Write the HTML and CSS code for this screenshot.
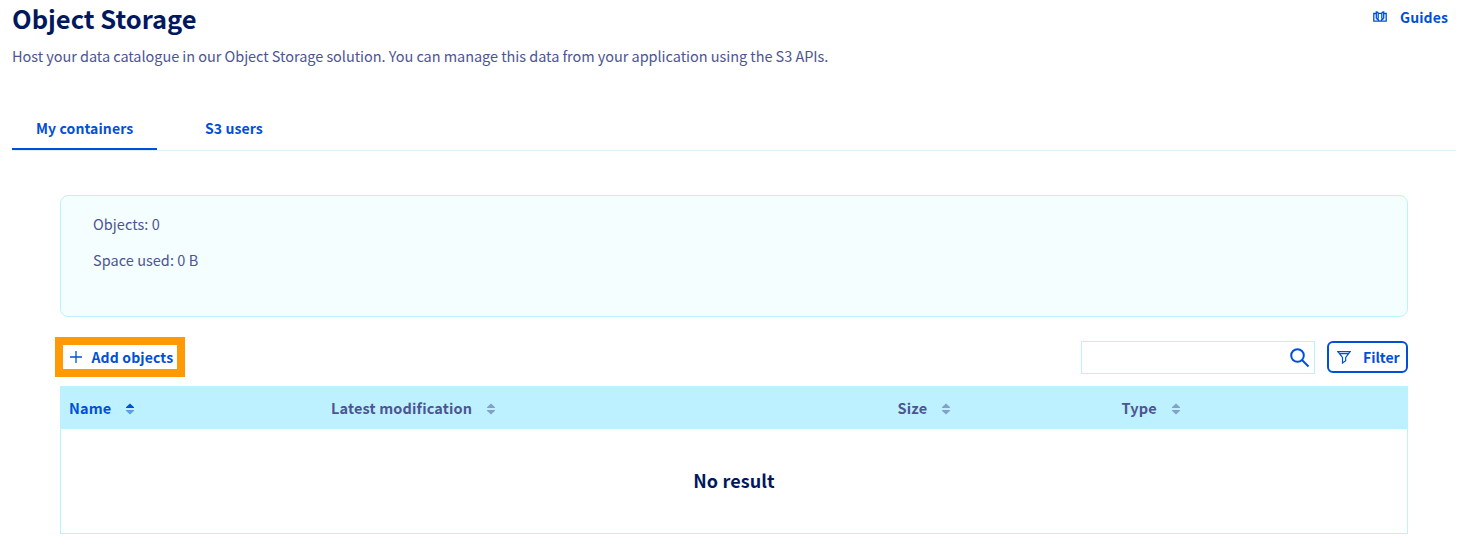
FILE: index.html
```html
<!DOCTYPE html>
<html lang="en">
<head>
<meta charset="utf-8">
<title>Object Storage</title>
<link rel="stylesheet" href="styles.css">
</head>
<body>
<header class="header">
  <h1 class="title">Object Storage</h1>
  <a class="guides">
    <svg class="guides-icon" width="14" height="12" viewBox="0 0 14 12" fill="none" stroke="currentColor" stroke-width="1.3"><path d="M3 2.500H.8v7.700h12.400V2.500H11M3.300 7.500V1q1.900.1 1.900 1.500V7.500M10.700 7.500V1q-1.900.1-1.900 1.500V7.500M3.300 7.500Q5.500 8 6 10M10.700 7.500Q8.500 8 8 10M5.200 2.300h3.600"/></svg>
    <span>Guides</span>
  </a>
</header>
<p class="description">Host your data catalogue in our Object Storage solution. You can manage this data from your application using the S3 APIs.</p>
<nav class="tabs">
  <a class="tab tab-active"><span>My containers</span></a>
  <a class="tab"><span>S3 users</span></a>
</nav>
<main class="content">
  <section class="summary">
    <p class="summary-line">Objects: 0</p>
    <p class="summary-line">Space used: 0 B</p>
  </section>
  <div class="toolbar">
    <button class="add">
      <svg width="12" height="12" viewBox="0 0 12 12" fill="none" stroke="currentColor" stroke-width="1.3"><path d="M6 0v12M0 6h12"/></svg>
      <span>Add objects</span>
    </button>
    <div class="tools">
      <div class="search">
        <svg width="20" height="20" viewBox="0 0 20 20" fill="none" stroke="currentColor" stroke-width="2"><circle cx="7.500" cy="7.500" r="6.300"/><path d="M12 12l6.500 6.500"/></svg>
      </div>
      <button class="filter">
        <svg width="14" height="13" viewBox="0 0 14 13" fill="none" stroke="currentColor" stroke-width="1.200"><path d="M.9.700h12.200L8.700 6.500v3.300L5.500 12V6.500zM2.500 2.600h9"/></svg>
        <span>Filter</span>
      </button>
    </div>
  </div>
  <div class="table">
    <div class="row">
      <div class="cell sorted"><span>Name</span><svg class="sort" width="8" height="12" viewBox="0 0 8 12"><path d="M4 .5l4 3.700v.8H0v-.8z"/><path class="down" d="M0 7h8v.8l-4 3.700-4-3.700z"/></svg></div>
      <div class="cell"><span>Latest modification</span><svg class="sort" width="8" height="12" viewBox="0 0 8 12"><path d="M4 .5l4 3.700v.8H0v-.8z"/><path d="M0 7h8v.8l-4 3.700-4-3.700z"/></svg></div>
      <div class="cell"><span>Size</span><svg class="sort" width="8" height="12" viewBox="0 0 8 12"><path d="M4 .5l4 3.700v.8H0v-.8z"/><path d="M0 7h8v.8l-4 3.700-4-3.700z"/></svg></div>
      <div class="cell"><span>Type</span><svg class="sort" width="8" height="12" viewBox="0 0 8 12"><path d="M4 .5l4 3.700v.8H0v-.8z"/><path d="M0 7h8v.8l-4 3.700-4-3.700z"/></svg></div>
    </div>
    <div class="empty">No result</div>
  </div>
</main>
</body>
</html>
```
FILE: styles.css
```css
* { box-sizing: border-box; }
body {
  margin: 0;
  padding: 0 14px 0 12px;
  background: #fff;
  color: #4d5592;
  font: 14.5px/24px "Noto Sans CJK JP", "Noto Sans", sans-serif;
}
h1, p { margin: 0; font-weight: 400; }
button { margin: 0; background: #fff; font: inherit; color: #0050d7; }
svg { flex: none; display: block; }
.header { display: flex; justify-content: space-between; height: 44px; }
.title { color: #00185e; font-size: 25.5px; line-height: 36px; font-weight: 700; }
.guides { display: flex; align-items: center; gap: 13px; height: 34px; padding-right: 8px; color: #0050d7; font-weight: 700; font-size: 14px; letter-spacing: 0.1px; }
.description { height: 62px; letter-spacing: -0.05px; }
.tabs { display: flex; height: 45px; border-bottom: 1px solid #e0f0fa; color: #0050d7; font-weight: 700; font-size: 14px; letter-spacing: 0.1px; }
.tab { height: 44px; padding: 10px 24px 0; margin-right: 24px; white-space: nowrap; }
.tab-active { border-bottom: 2px solid #0050d7; width: 145px; }
.content { padding: 44px 48px 0; }
.summary { height: 122px; padding: 16px 32px; border: 1px solid #bef1ff; border-radius: 8px; background: #f5feff; letter-spacing: 0.04px; }
.summary-line { margin-bottom: 12px; }
.toolbar { display: flex; justify-content: space-between; height: 69px; padding-top: 20px; }
.add { display: flex; align-items: center; gap: 9.5px; width: 130px; height: 40px; margin-left: -5px; padding: 0 0 0 7px; border: 8px solid #ff9a05; font-weight: 700; font-size: 14px; letter-spacing: 0.14px; }
.tools { display: flex; gap: 12px; padding-top: 4px; }
.search { display: flex; align-items: center; justify-content: flex-end; width: 234px; height: 33px; padding-right: 4px; border: 1px solid #bef1ff; color: #0050d7; }
.filter { display: flex; align-items: center; gap: 12px; width: 81px; height: 32px; padding: 0 0 0 8px; border: 2px solid #0050d7; border-radius: 6px; font-weight: 700; font-size: 14px; }
.table { height: 148px; border: 1px solid #bef1ff; border-top: 0; }
.row { display: grid; grid-template-columns: 262px 566.5px 224px 1fr; height: 43px; margin: 0 -1px; padding-left: 1px; background: #bef1ff; }
.cell { display: flex; align-items: center; gap: 15px; padding: 2px 0 0 8px; font-weight: 700; font-size: 14.5px; letter-spacing: 0.15px; }
.cell span { margin-top: -2px; }
.sorted { color: #0050d7; }
.sort { fill: #839fca; }
.sorted .sort { fill: #0050d7; }
.sorted .down { fill: #609ced; }
.empty { display: flex; align-items: center; justify-content: center; height: 102px; color: #00185e; font-weight: 700; font-size: 18px; letter-spacing: 0.1px; }
```
